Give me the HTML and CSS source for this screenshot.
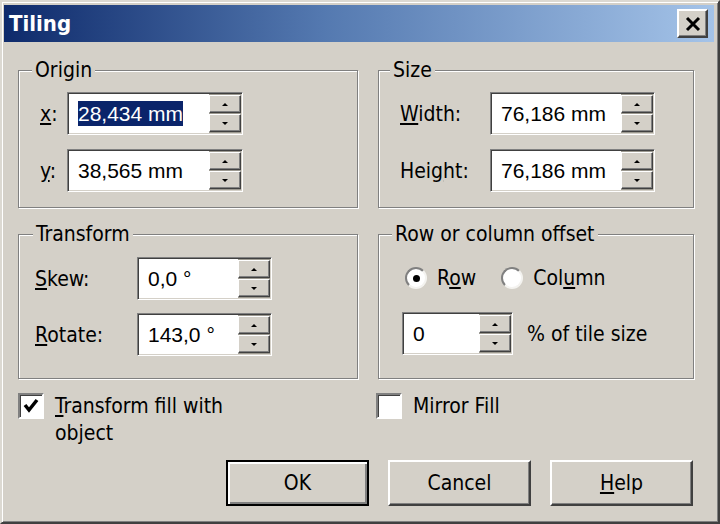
FILE: index.html
```html
<!DOCTYPE html>
<html lang="en">
<head>
    <meta charset="UTF-8">
    <meta name="viewport" content="width=device-width, initial-scale=1.0">
    <title>Tiling</title>
    <link rel="stylesheet" href="styles.css">
</head>
<body>
    <div class="window">
        <div class="titlebar">
            <span class="title">Tiling</span>
            <button class="close-btn" aria-label="Close">
                <svg width="16" height="16" viewBox="0 0 16 16">
                    <path d="M2 2 L14 14 M14 2 L2 14" stroke="#000" stroke-width="3" fill="none"/>
                </svg>
            </button>
        </div>

        <div class="dialog-body">
            <div class="groups">
                <fieldset class="group">
                    <legend>Origin</legend>
                    <div class="group-content origin">
                        <label class="field-label"><u>x</u>:</label>
                        <div class="spin-input w-origin">
                            <span class="value"><span class="selected">28,434 mm</span></span>
                            <span class="spin"><span class="spin-btn up"></span><span class="spin-btn down"></span></span>
                        </div>
                        <label class="field-label"><u>y</u>:</label>
                        <div class="spin-input w-origin">
                            <span class="value">38,565 mm</span>
                            <span class="spin"><span class="spin-btn up"></span><span class="spin-btn down"></span></span>
                        </div>
                    </div>
                </fieldset>

                <fieldset class="group">
                    <legend class="legend-size">Size</legend>
                    <div class="group-content size">
                        <label class="field-label"><u>W</u>idth:</label>
                        <div class="spin-input w-size">
                            <span class="value">76,186 mm</span>
                            <span class="spin"><span class="spin-btn up"></span><span class="spin-btn down"></span></span>
                        </div>
                        <label class="field-label">Hei<u>g</u>ht:</label>
                        <div class="spin-input w-size">
                            <span class="value">76,186 mm</span>
                            <span class="spin"><span class="spin-btn up"></span><span class="spin-btn down"></span></span>
                        </div>
                    </div>
                </fieldset>

                <fieldset class="group">
                    <legend class="legend-transform">Transform</legend>
                    <div class="group-content transform">
                        <label class="field-label"><u>S</u>kew:</label>
                        <div class="spin-input w-transform">
                            <span class="value">0,0 °</span>
                            <span class="spin"><span class="spin-btn up"></span><span class="spin-btn down"></span></span>
                        </div>
                        <label class="field-label"><u>R</u>otate:</label>
                        <div class="spin-input w-transform">
                            <span class="value">143,0 °</span>
                            <span class="spin"><span class="spin-btn up"></span><span class="spin-btn down"></span></span>
                        </div>
                    </div>
                </fieldset>

                <fieldset class="group">
                    <legend>Row or column offset</legend>
                    <div class="group-content offset">
                        <div class="radio-row">
                            <label class="radio"><span class="radio-dot checked"></span><span>R<u>o</u>w</span></label>
                            <label class="radio"><span class="radio-dot"></span><span>Col<u>u</u>mn</span></label>
                        </div>
                        <div class="offset-row">
                            <div class="spin-input w-offset">
                                <span class="value">0</span>
                                <span class="spin"><span class="spin-btn up"></span><span class="spin-btn down"></span></span>
                            </div>
                            <span>% of tile size</span>
                        </div>
                    </div>
                </fieldset>
            </div>

            <div class="options">
                <label class="check">
                    <span class="check-box">
                        <svg width="22" height="22" viewBox="0 0 22 22">
                            <polyline points="5,10 9,15 17,5" stroke="#000" stroke-width="3.5" fill="none"/>
                        </svg>
                    </span>
                    <span class="check-text"><u>T</u>ransform fill with object</span>
                </label>
                <label class="check">
                    <span class="check-box"></span>
                    <span class="check-text">Mirror Fill</span>
                </label>
            </div>

            <div class="buttons">
                <button class="btn default">OK</button>
                <button class="btn">Cancel</button>
                <button class="btn"><u>H</u>elp</button>
            </div>
        </div>
    </div>
</body>
</html>
```

FILE: styles.css
```css
body {
    margin: 0;
    background: #d4d0c8;
    font-family: "DejaVu Sans Condensed", "DejaVu Sans", sans-serif;
    font-stretch: condensed;
    font-size: 21px;
    color: #000;
}

.window {
    width: 720px;
    height: 524px;
    box-sizing: border-box;
    background: #d4d0c8;
    border: 2px solid;
    border-color: #dcd9d2 #404040 #404040 #dcd9d2;
    box-shadow: inset 1px 1px #fff, inset -1px -1px #808080;
    padding: 3px 4px 0 2px;
}

/* title bar */
.titlebar {
    height: 37px;
    display: flex;
    align-items: center;
    justify-content: space-between;
    background: linear-gradient(to right, #0e2a6b, #5479b0 45%, #a4c3e8);
    padding: 0 6px 0 5px;
}

.title {
    color: #fff;
    font-weight: bold;
    font-size: 22px;
}

.close-btn {
    width: 31px;
    height: 29px;
    padding: 0;
    display: flex;
    align-items: center;
    justify-content: center;
    background: #d4d0c8;
    border: 2px solid;
    border-color: #fff #404040 #404040 #fff;
    box-shadow: inset -1px -1px #808080;
}

/* body */
.dialog-body {
    padding: 16px 20px 0 14px;
}

.groups {
    display: grid;
    grid-template-columns: 340px 316px;
    column-gap: 20px;
    row-gap: 14px;
}

.group {
    margin: 0;
    padding: 0;
    min-width: 0;
    border: 1px solid #808080;
    box-shadow: inset 1px 1px #fff, 1px 1px #fff;
}

.group legend {
    margin-left: 13px;
    padding: 0 3px;
    line-height: 24px;
    background: #d4d0c8;
}

.group .legend-size {
    margin-left: 11px;
}

.group .legend-transform {
    margin-left: 14px;
}

.group-content {
    display: grid;
    align-items: center;
}

.group-content.origin {
    grid-template-columns: 27px auto;
    row-gap: 14px;
    padding: 10px 0 15px 21px;
}

.group-content.size {
    grid-template-columns: 90px auto;
    row-gap: 14px;
    padding: 10px 0 15px 21px;
}

.group-content.transform {
    grid-template-columns: 102px auto;
    row-gap: 13px;
    padding: 11px 0 22px 16px;
}

.group-content.offset {
    display: block;
    padding: 20px 0 0 23px;
}

.field-label {
    white-space: nowrap;
}

/* spin edit */
.spin-input {
    height: 43px;
    box-sizing: border-box;
    display: flex;
    align-items: stretch;
    background: #fff;
    border: 1px solid;
    border-color: #808080 #fff #fff #808080;
    box-shadow: inset 1px 1px #404040, inset -1px -1px #d4d0c8;
    padding: 1px;
}

.w-origin { width: 176px; }
.w-size { width: 165px; }
.w-transform { width: 135px; }
.w-offset { width: 111px; }

.value {
    flex: 1;
    display: flex;
    align-items: center;
    padding-left: 9px;
    font-family: "Liberation Sans", Arial, sans-serif;
    font-size: 21px;
    white-space: nowrap;
}

.selected {
    background: #0a246a;
    color: #fff;
    line-height: 25px;
}

.spin {
    width: 32px;
    display: flex;
    flex-direction: column;
    justify-content: space-between;
    background: #9c9990;
    padding: 1px 0;
}

.spin-btn {
    height: 16px;
    display: flex;
    align-items: center;
    justify-content: center;
    background: #d4d0c8;
    border: 1px solid;
    border-color: #fff #404040 #404040 #fff;
    box-shadow: inset -1px -1px #808080;
}

.spin-btn::after {
    content: "";
    border-left: 3px solid transparent;
    border-right: 3px solid transparent;
}

.spin-btn.up::after {
    border-bottom: 3px solid #000;
}

.spin-btn.down::after {
    border-top: 3px solid #000;
}

/* radio buttons */
.radio-row {
    display: flex;
    gap: 25px;
    height: 24px;
    align-items: center;
    margin-left: 3px;
}

.radio {
    display: flex;
    align-items: center;
    gap: 10px;
}

.radio-dot {
    width: 22px;
    height: 22px;
    box-sizing: border-box;
    border-radius: 50%;
    border: 2px solid;
    border-color: #808080 #f4f3f0 #f4f3f0 #808080;
    background: #fff;
    display: flex;
    align-items: center;
    justify-content: center;
}

.radio-dot.checked::after {
    content: "";
    width: 7px;
    height: 7px;
    border-radius: 50%;
    background: #000;
}

.offset-row {
    display: flex;
    align-items: center;
    gap: 14px;
    margin-top: 22px;
}

/* checkboxes */
.options {
    display: grid;
    grid-template-columns: 340px 316px;
    column-gap: 20px;
    margin-top: 14px;
}

.check {
    display: flex;
    align-items: flex-start;
    gap: 11px;
    line-height: 27px;
}

.options .check:last-child {
    margin-left: -2px;
}

.check-box {
    flex: none;
    width: 26px;
    height: 26px;
    box-sizing: border-box;
    background: #fff;
    border: 2px solid;
    border-color: #808080 #fff #fff #808080;
    box-shadow: inset 1px 1px #404040;
    display: flex;
    align-items: center;
    justify-content: center;
}

.check-text {
    width: 180px;
}

/* dialog buttons */
.buttons {
    display: flex;
    justify-content: flex-end;
    gap: 19px;
    margin-top: 13px;
    padding-right: 1px;
}

.btn {
    width: 143px;
    height: 46px;
    font-family: inherit;
    font-stretch: condensed;
    font-size: 21px;
    color: #000;
    background: #d4d0c8;
    border: 2px solid;
    border-color: #fff #404040 #404040 #fff;
    box-shadow: inset -1px -1px #808080;
    padding: 0;
}

.btn.default {
    border: 2px solid #000;
    box-shadow: inset 2px 2px #fff, inset -2px -2px #808080;
}
```
